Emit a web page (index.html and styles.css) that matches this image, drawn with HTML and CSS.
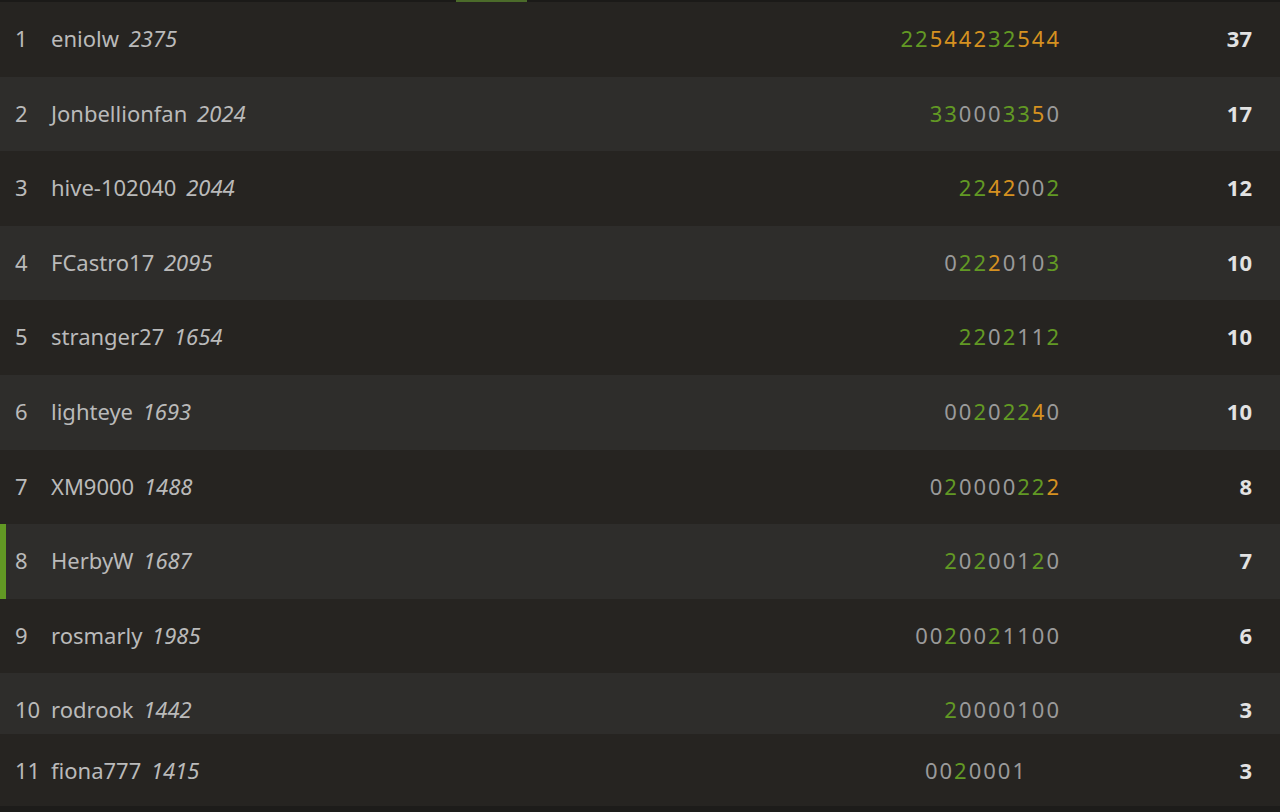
FILE: index.html
```html
<!DOCTYPE html>
<html lang="en">
<head>
    <meta charset="UTF-8">
    <title>Arena standings</title>
    <link rel="stylesheet" href="styles.css">
</head>
<body>
    <div class="top-bar"><span class="top-mark"></span></div>

    <div class="standings">
        <div class="row">
            <span class="rank">1</span>
            <span class="player">eniolw <em>2375</em></span>
            <span class="sheet"><b class="g">2</b><b class="g">2</b><b class="o">5</b><b class="o">4</b><b class="o">4</b><b class="o">2</b><b class="g">3</b><b class="g">2</b><b class="o">5</b><b class="o">4</b><b class="o">4</b></span>
            <span class="total">37</span>
        </div>
        <div class="row">
            <span class="rank">2</span>
            <span class="player">Jonbellionfan <em>2024</em></span>
            <span class="sheet"><b class="g">3</b><b class="g">3</b>000<b class="g">3</b><b class="g">3</b><b class="o">5</b>0</span>
            <span class="total">17</span>
        </div>
        <div class="row">
            <span class="rank">3</span>
            <span class="player">hive-102040 <em>2044</em></span>
            <span class="sheet"><b class="g">2</b><b class="g">2</b><b class="o">4</b><b class="o">2</b>00<b class="g">2</b></span>
            <span class="total">12</span>
        </div>
        <div class="row">
            <span class="rank">4</span>
            <span class="player">FCastro17 <em>2095</em></span>
            <span class="sheet">0<b class="g">2</b><b class="g">2</b><b class="o">2</b>010<b class="g">3</b></span>
            <span class="total">10</span>
        </div>
        <div class="row">
            <span class="rank">5</span>
            <span class="player">stranger27 <em>1654</em></span>
            <span class="sheet"><b class="g">2</b><b class="g">2</b>0<b class="g">2</b>11<b class="g">2</b></span>
            <span class="total">10</span>
        </div>
        <div class="row">
            <span class="rank">6</span>
            <span class="player">lighteye <em>1693</em></span>
            <span class="sheet">00<b class="g">2</b>0<b class="g">2</b><b class="g">2</b><b class="o">4</b>0</span>
            <span class="total">10</span>
        </div>
        <div class="row">
            <span class="rank">7</span>
            <span class="player">XM9000 <em>1488</em></span>
            <span class="sheet">0<b class="g">2</b>0000<b class="g">2</b><b class="g">2</b><b class="o">2</b></span>
            <span class="total">8</span>
        </div>
        <div class="row me">
            <span class="rank">8</span>
            <span class="player">HerbyW <em>1687</em></span>
            <span class="sheet"><b class="g">2</b>0<b class="g">2</b>001<b class="g">2</b>0</span>
            <span class="total">7</span>
        </div>
        <div class="row">
            <span class="rank">9</span>
            <span class="player">rosmarly <em>1985</em></span>
            <span class="sheet">00<b class="g">2</b>00<b class="g">2</b>1100</span>
            <span class="total">6</span>
        </div>
        <div class="row row-cut">
            <span class="rank">10</span>
            <span class="player">rodrook <em>1442</em></span>
            <span class="sheet"><b class="g">2</b>0000100</span>
            <span class="total">3</span>
        </div>
        <div class="row row-last">
            <span class="rank">11</span>
            <span class="player">fiona777 <em>1415</em></span>
            <span class="sheet sheet-short">00<b class="g">2</b>0001</span>
            <span class="total">3</span>
        </div>
    </div>
</body>
</html>
```

FILE: styles.css
```css
:root {
    --bg-dark: #1d1c1a;
    --row-odd: #262421;
    --row-even: #2e2d2b;
    --text: #bababa;
    --text-strong: #e2e2e2;
    --muted: #9a9a9a;
    --green: #629924;
    --orange: #d59120;
}

body {
    margin: 0;
    background-color: var(--bg-dark);
    font-family: "Noto Sans", "Open Sans", sans-serif;
    color: var(--text);
    -webkit-font-smoothing: antialiased;
}

.top-bar {
    height: 2px;
    background-color: #1b1a18;
    position: relative;
}

.top-mark {
    position: absolute;
    left: 456px;
    top: 0;
    width: 71px;
    height: 2px;
    background-color: #4b6b2a;
}

.standings {
    display: flex;
    flex-direction: column;
}

.row {
    display: flex;
    align-items: flex-start;
    box-sizing: border-box;
    height: 74.6px;
    padding: 22px 28px 0 15px;
    font-size: 22px;
    line-height: 28px;
    background-color: var(--row-odd);
}

.row:nth-child(even) {
    background-color: var(--row-even);
}

.row-cut {
    height: 61px;
}

.row-last {
    height: 72px;
}

.me {
    box-shadow: inset 6px 0 0 var(--green);
}

.rank {
    width: 36px;
    flex-shrink: 0;
}

.player {
    flex: 1;
    white-space: nowrap;
}

.player em {
    font-style: italic;
    margin-left: 4px;
}

.sheet {
    color: var(--muted);
    letter-spacing: 2px;
    margin-right: -2px;
}

.sheet b {
    font-weight: 400;
}

.sheet .g {
    color: var(--green);
}

.sheet .o {
    color: var(--orange);
}

.sheet-short {
    margin-right: 32px;
}

.total {
    width: 193px;
    text-align: right;
    font-weight: 700;
    color: var(--text-strong);
}
```
